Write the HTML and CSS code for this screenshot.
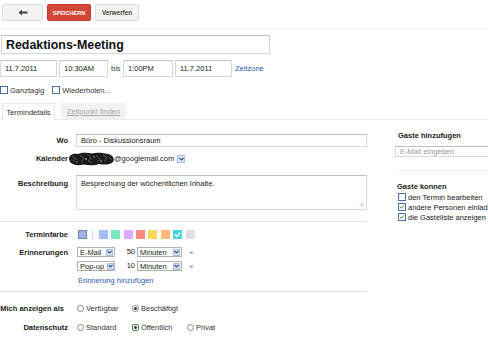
FILE: index.html
```html
<!DOCTYPE html>
<html lang="de">
<head>
<meta charset="utf-8">
<title>Redaktions-Meeting</title>
<link rel="stylesheet" href="styles.css">
</head>
<body>
<div class="toolbar">
  <div class="btn btn-back"><svg width="10" height="7" viewBox="0 0 10 7"><path d="M0.5 3.5 L4 0.5 V2.5 H9.5 V4.5 H4 V6.5 Z" fill="#444"/></svg></div>
  <div class="btn btn-red">SPEICHERN</div>
  <div class="btn">Verwerfen</div>
</div>

<div class="head">
  <div class="title">Redaktions-Meeting</div>
  <div class="daterow">
    <div class="field f1">11.7.2011</div>
    <div class="field f2">10:30AM</div>
    <span class="bis">bis</span>
    <div class="field f3">1:00PM</div>
    <div class="field f4">11.7.2011</div>
    <a class="link zone">Zeitzone</a>
  </div>
  <div class="checkrow">
    <span class="cb"></span><span class="cbtext">Ganztagig</span>
    <span class="cb cb2"></span><span class="cbtext">Wiederholen...</span>
  </div>
  <div class="tabs">
    <div class="tab active">Termindetails</div>
    <div class="tab inactive"><u>Zeitpunkt finden</u></div>
  </div>
</div>

<div class="body">
  <div class="main">
    <div class="row r-wo">
      <div class="lbl">Wo</div>
      <div class="input wide">Büro - Diskussionsraum</div>
    </div>
    <div class="row r-kal">
      <div class="lbl">Kalender</div>
      <div class="calsel">
        <svg class="blob" width="48" height="14" viewBox="0 0 48 14">
          <path d="M1 7 C1 3 5 1 10 2 C14 0 20 1 24 1.5 C29 0 35 1 40 2 C45 3 47 7 45 10 C42 13 36 13 31 12 C26 14 20 13 15 12.5 C10 14 4 13 2 10 Z" fill="#1a1a1a"/>
          <path d="M4 4 L8 7 L5 9 M12 3 L16 6 L13 10 M19 2 L23 6 L20 9 L24 11 M28 3 L32 7 L29 10 M35 3 L39 6 L36 10 M41 5 L44 8" stroke="#6f6f6f" stroke-width="0.7" fill="none"/>
          <circle cx="18" cy="7" r="1" fill="#888"/><circle cx="33" cy="9" r="1" fill="#777"/><circle cx="9" cy="10" r="0.8" fill="#888"/><circle cx="26" cy="5" r="0.8" fill="#999"/>
        </svg>
        <span class="caltext">@googlemail.com</span>
        <span class="arrow"><svg width="5" height="4" viewBox="0 0 5 4"><path d="M0.5 1 L2.5 3 L4.5 1" stroke="#2d4f94" stroke-width="1.2" fill="none"/></svg></span>
      </div>
    </div>
    <div class="row r-desc">
      <div class="lbl lbl-top">Beschreibung</div>
      <div class="input area">Besprechung der wöchentlichen Inhalte.
        <svg class="grip" width="5" height="5" viewBox="0 0 5 5"><path d="M4.5 0.5 L0.5 4.5 M4.5 2.5 L2.5 4.5" stroke="#aaa" stroke-width="0.7"/></svg>
      </div>
    </div>
    <div class="sep sep1"></div>
    <div class="row r-color">
      <div class="lbl">Terminfarbe</div>
      <div class="swatches">
        <span class="sw sw-def"></span>
        <span class="divider"></span>
        <span class="sw" style="background:#a4bdfc"></span>
        <span class="sw" style="background:#7ae7bf"></span>
        <span class="sw" style="background:#dbadff"></span>
        <span class="sw" style="background:#ff887c"></span>
        <span class="sw" style="background:#fbd75b"></span>
        <span class="sw" style="background:#ffb878"></span>
        <span class="sw" style="background:#46d6db"><svg width="9" height="9" viewBox="0 0 9 9"><path d="M2 4.6 L3.8 6.4 L7.2 2.6" stroke="#fff" stroke-width="1.4" fill="none"/></svg></span>
        <span class="sw" style="background:#e1e1e1"></span>
      </div>
    </div>
    <div class="row r-rem1">
      <div class="lbl">Erinnerungen</div>
      <div class="remind">
        <span class="sel s-type"><span>E-Mail</span><span class="arrow"><svg width="5" height="4" viewBox="0 0 5 4"><path d="M0.5 1 L2.5 3 L4.5 1" stroke="#2d4f94" stroke-width="1.2" fill="none"/></svg></span></span>
        <span class="num">50</span>
        <span class="sel s-unit"><span>Minuten</span><span class="arrow"><svg width="5" height="4" viewBox="0 0 5 4"><path d="M0.5 1 L2.5 3 L4.5 1" stroke="#2d4f94" stroke-width="1.2" fill="none"/></svg></span></span>
        <span class="x">×</span>
      </div>
    </div>
    <div class="row r-rem2">
      <div class="lbl"></div>
      <div class="remind">
        <span class="sel s-type"><span>Pop-up</span><span class="arrow"><svg width="5" height="4" viewBox="0 0 5 4"><path d="M0.5 1 L2.5 3 L4.5 1" stroke="#2d4f94" stroke-width="1.2" fill="none"/></svg></span></span>
        <span class="num">10</span>
        <span class="sel s-unit"><span>Minuten</span><span class="arrow"><svg width="5" height="4" viewBox="0 0 5 4"><path d="M0.5 1 L2.5 3 L4.5 1" stroke="#2d4f94" stroke-width="1.2" fill="none"/></svg></span></span>
        <span class="x">×</span>
      </div>
    </div>
    <div class="row r-add">
      <div class="lbl"></div>
      <a class="link">Erinnerung hinzufügen</a>
    </div>
    <div class="sep sep2"></div>
    <div class="row r-show">
      <div class="lbl lbl-wide">Mich anzeigen als</div>
      <div class="radios">
        <span class="radio"></span><span class="rtext w1">Verfügbar</span>
        <span class="radio on"></span><span class="rtext">Beschäftigt</span>
      </div>
    </div>
    <div class="row r-priv">
      <div class="lbl">Datenschutz</div>
      <div class="radios">
        <span class="radio"></span><span class="rtext w1">Standard</span>
        <span class="radio on sq"></span><span class="rtext w2">Öffentlich</span>
        <span class="radio"></span><span class="rtext">Privat</span>
      </div>
    </div>
  </div>

  <div class="side">
    <div class="stitle">Gaste hinzufugen</div>
    <div class="input sinput">E-Mail eingeben</div>
    <div class="ssep"></div>
    <div class="stitle s2">Gaste konnen</div>
    <div class="opt"><span class="cb"></span>den Termin bearbeiten</div>
    <div class="opt"><span class="cb checked"><svg width="8" height="8" viewBox="0 0 8 8"><path d="M1.5 4 L3.2 5.8 L6.6 1.8" stroke="#2f8a1e" stroke-width="1.3" fill="none"/></svg></span>andere Personen einlad</div>
    <div class="opt"><span class="cb checked"><svg width="8" height="8" viewBox="0 0 8 8"><path d="M1.5 4 L3.2 5.8 L6.6 1.8" stroke="#2f8a1e" stroke-width="1.3" fill="none"/></svg></span>die Gasteliste anzeigen</div>
  </div>
</div>
</body>
</html>
```

FILE: styles.css
```css
html, body {
  margin: 0;
  padding: 0;
}
body {
  width: 488px;
  height: 339px;
  overflow: hidden;
  background: #fff;
  font-family: "Liberation Sans", Arial, sans-serif;
  font-size: 7.5px;
  color: #222;
}

/* toolbar */
.toolbar {
  box-sizing: border-box;
  border-bottom: 1px solid #ececec;
  display: flex;
  align-items: flex-start;
  gap: 4px;
  padding: 4px 0 0 2px;
  height: 29px;
}
.btn {
  width: 44px;
  height: 17px;
  box-sizing: border-box;
  border: 1px solid #dcdcdc;
  border-radius: 2px;
  background: #f3f3f3;
  display: flex;
  align-items: center;
  justify-content: center;
  font-weight: bold;
  font-size: 6.3px;
  color: #444;
}
.btn-back { width: 41px; }
.btn-red {
  background: #d14836;
  border-color: #c53727;
  color: #fff;
  font-size: 5.6px;
}

/* head */
.head { padding-left: 1px; }
.title {
  margin-top: 6px;
  width: 269px;
  height: 19px;
  box-sizing: border-box;
  border: 1px solid #d6d6d6;
  border-top-color: #bdbdbd;
  padding-left: 4px;
  display: flex;
  align-items: center;
  font-size: 12.4px;
  font-weight: bold;
  color: #111;
}
.daterow {
  margin-top: 6px;
  height: 17px;
  display: flex;
  align-items: center;
  margin-left: -1px;
}
.field {
  height: 17px;
  box-sizing: border-box;
  border: 1px solid #d8d8d8;
  border-top-color: #c2c2c2;
  padding-left: 4px;
  display: flex;
  align-items: center;
}
.f1 { width: 57px; }
.f2 { width: 49px; margin-left: 2px; }
.bis { margin: 0 3px 0 3px; width: 9px; color: #444; }
.f3 { width: 50px; }
.f4 { width: 57px; margin-left: 2px; }
.zone { margin-left: 3px; }
.link { color: #2a5db0; }

.checkrow {
  margin-top: 7px;
  height: 12px;
  display: flex;
  align-items: center;
  margin-left: -1px;
}
.cb {
  width: 8px;
  height: 8px;
  box-sizing: border-box;
  border: 1px solid #4b6fa8;
  background: #fff;
  display: inline-flex;
  flex-shrink: 0;
}
.cbtext { margin-left: 2px; color: #333; }
.cb2 { margin-left: 8px; }

.tabs {
  margin-top: 7px;
  height: 16px;
  border-bottom: 1px solid #ebebeb;
  display: flex;
  align-items: flex-end;
  margin-left: -1px;
  padding-left: 2px;
}
.tab {
  height: 16px;
  box-sizing: border-box;
  display: flex;
  align-items: center;
  justify-content: center;
}
.tab.active {
  width: 53px;
  border: 1px solid #e6e6e6;
  border-bottom: none;
  background: #fff;
  margin-bottom: -1px;
  height: 17px;
  color: #333;
}
.tab.inactive {
  width: 65px;
  margin-left: 6px;
  background: #f1f1f1;
  color: #aaa;
}

/* body */
.body {
  display: flex;
  margin-top: 14px;
}
.main { width: 368px; flex-shrink: 0; }
.row {
  display: flex;
  align-items: center;
}
.lbl {
  width: 68px;
  margin-right: 8px;
  flex-shrink: 0;
  text-align: right;
  font-weight: bold;
  color: #222;
}
.lbl-top { align-self: flex-start; padding-top: 4px; }
.lbl-wide { width: 64px; margin-right: 12px; white-space: nowrap; }
.input {
  box-sizing: border-box;
  border: 1px solid #d9d9d9;
  border-top-color: #c0c0c0;
  padding-left: 4px;
  display: flex;
  align-items: center;
}
.wide { width: 291px; height: 13px; }
.r-wo { height: 13px; }
.r-kal { margin-top: 5px; height: 13px; }
.calsel {
  display: flex;
  align-items: center;
  margin-left: -8px;
}
.blob { display: block; }
.caltext { margin-left: -2px; }
.arrow {
  width: 8px;
  height: 8px;
  box-sizing: border-box;
  border: 1px solid #a9bde0;
  background: #dde7f7;
  display: inline-flex;
  align-items: center;
  justify-content: center;
  margin-left: 3px;
  flex-shrink: 0;
}
.r-desc { margin-top: 10px; align-items: flex-start; }
.area {
  width: 291px;
  height: 35px;
  align-items: flex-start;
  padding-top: 3px;
  position: relative;
}
.grip { position: absolute; right: 2px; bottom: 2px; }

.sep {
  height: 1px;
  width: 367px;
  background: #e0e0e0;
}
.sep1 { margin-top: 11px; }
.sep2 { margin-top: 6px; }

.r-color { margin-top: 8px; height: 9px; }
.swatches {
  display: flex;
  align-items: center;
  gap: 3.4px;
  margin-left: 2px;
}
.sw {
  width: 9px;
  height: 9px;
  display: inline-flex;
  box-sizing: border-box;
}
.sw-def {
  background: #9fb4e0;
  border: 1px solid #6e86bd;
}
.divider {
  width: 1px;
  height: 9px;
  background: #d4d4d4;
  margin: 0 2px;
}

.r-rem1 { margin-top: 8px; height: 10px; }
.r-rem2 { margin-top: 4px; height: 10px; }
.remind { display: flex; align-items: center; margin-left: 1px; }
.sel {
  height: 10px;
  box-sizing: border-box;
  border: 1px solid #b0b0b0;
  padding-left: 2px;
  padding-right: 1px;
  display: flex;
  align-items: center;
  justify-content: space-between;
  white-space: nowrap;
}
.sel .arrow { width: 7px; height: 7px; }
.s-type { width: 38px; }
.s-unit { width: 45px; }
.num {
  width: 17px;
  height: 10px;
  box-sizing: border-box;
  text-align: right;
  margin: 0 2px 0 3px;
  line-height: 10px;
}
.x { margin-left: 7px; color: #777; font-size: 8px; }

.r-add { margin-top: 4px; height: 10px; }
.r-add .link { margin-left: 2px; }

.r-show { margin-top: 11px; height: 10px; }
.r-priv { margin-top: 9px; height: 10px; }
.radios { display: flex; align-items: center; margin-left: 1px; }
.radio {
  width: 7px;
  height: 7px;
  box-sizing: border-box;
  border: 1px solid #8a8a8a;
  border-radius: 50%;
  display: inline-flex;
  align-items: center;
  justify-content: center;
  flex-shrink: 0;
}
.radio.on::after {
  content: "";
  width: 3px;
  height: 3px;
  border-radius: 50%;
  background: #333;
}
.radio.sq { border-radius: 2px; border-color: #4a7f4a; }
.rtext { margin-left: 2px; color: #333; }
.w1 { width: 46px; }
.w2 { width: 46px; }

/* side */
.side {
  margin-left: 27px;
  margin-top: -3px;
  width: 93px;
  flex-shrink: 0;
  white-space: nowrap;
  overflow: hidden;
}
.stitle {
  font-weight: bold;
  height: 10px;
  line-height: 10px;
  padding-left: 3px;
}
.sinput {
  margin-top: 5px;
  width: 100px;
  height: 11px;
  color: #999;
}
.ssep {
  margin-top: 13px;
  height: 1px;
  background: #eeeeee;
}
.s2 { margin-top: 11px; padding-left: 2px; }
.opt {
  height: 10px;
  display: flex;
  align-items: center;
  margin-left: 3px;
  color: #222;
}
.opt .cb { margin-right: 2px; }
.cb.checked { align-items: center; justify-content: center; border-color: #4b6fa8; }
```
